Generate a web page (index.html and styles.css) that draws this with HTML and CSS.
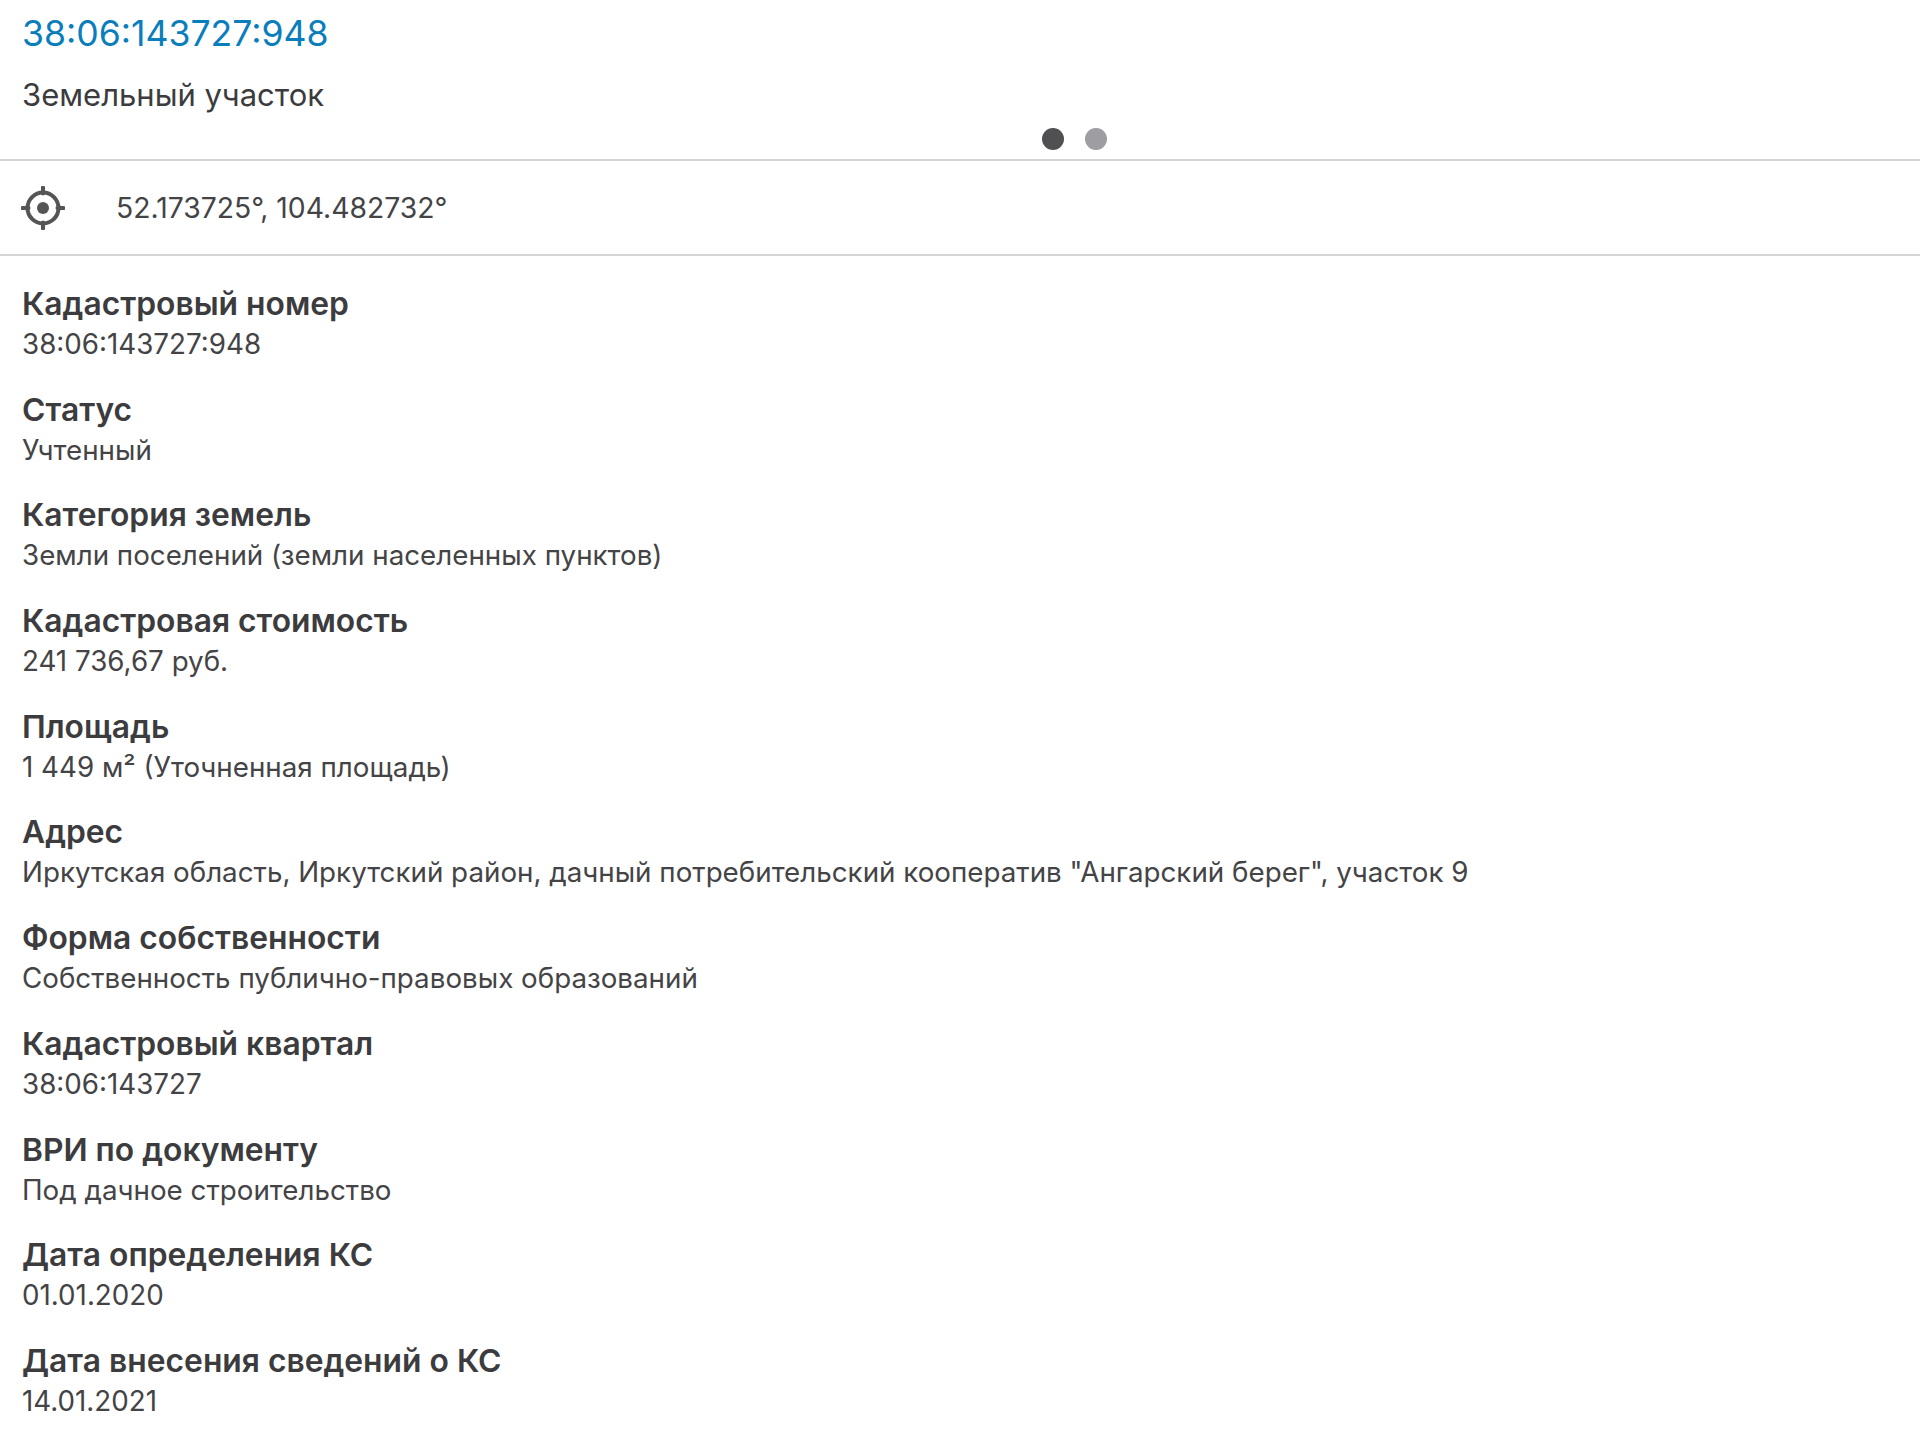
FILE: index.html
```html
<!DOCTYPE html>
<html lang="ru">
<head>
    <meta charset="UTF-8">
    <meta name="viewport" content="width=device-width, initial-scale=1.0">
    <title>Земельный участок</title>
    <link rel="stylesheet" href="styles.css">
</head>
<body>
    <!-- шапка -->
    <div class="head">
        <a class="number" href="javascript:;">38:06:143727:948</a>
        <div class="type">Земельный участок</div>
        <div class="dots">
            <span class="dot on"></span>
            <span class="dot"></span>
        </div>
    </div>
    <!-- координаты -->
    <div class="coords">
        <svg class="target" width="44" height="44" viewBox="0 0 44 44">
            <circle cx="22" cy="22" r="15.5" fill="none" stroke="#555" stroke-width="4"/>
            <circle cx="22" cy="22" r="6" fill="#555"/>
            <path d="M22 1.5v6M22 36.5v6M1.5 22h6M36.5 22h6" stroke="#555" stroke-width="4" stroke-linecap="round"/>
        </svg>
        <span>52.173725°, 104.482732°</span>
    </div>
    <!-- свойства -->
    <div class="props">
        <div class="prop"><div class="name">Кадастровый номер</div><div class="value">38:06:143727:948</div></div>
        <div class="prop"><div class="name">Статус</div><div class="value">Учтенный</div></div>
        <div class="prop"><div class="name">Категория земель</div><div class="value">Земли поселений (земли населенных пунктов)</div></div>
        <div class="prop"><div class="name">Кадастровая стоимость</div><div class="value">241 736,67 руб.</div></div>
        <div class="prop"><div class="name">Площадь</div><div class="value">1 449 м² (Уточненная площадь)</div></div>
        <div class="prop"><div class="name">Адрес</div><div class="value">Иркутская область, Иркутский район, дачный потребительский кооператив "Ангарский берег", участок 9</div></div>
        <div class="prop"><div class="name">Форма собственности</div><div class="value">Собственность публично-правовых образований</div></div>
        <div class="prop"><div class="name">Кадастровый квартал</div><div class="value">38:06:143727</div></div>
        <div class="prop"><div class="name">ВРИ по документу</div><div class="value">Под дачное строительство</div></div>
        <div class="prop"><div class="name">Дата определения КС</div><div class="value">01.01.2020</div></div>
        <div class="prop"><div class="name">Дата внесения сведений о КС</div><div class="value">14.01.2021</div></div>
    </div>
</body>
</html>
```

FILE: styles.css
```css
*{
    margin: 0;
    padding: 0;
    box-sizing: border-box;
}
html, body{
    height: 1440px;
    overflow: hidden;
}
body{
    background: #fff;
    color: #3c3c3e;
    font-family: Inter, "Noto Sans", sans-serif;
}
.head{
    height: 161px;
    padding: 13px 22px 0;
    border-bottom: 2px solid #d4d4d4;
}
.number{
    display: block;
    height: 42px;
    line-height: 42px;
    color: #0a7dbd;
    font-size: 35.6px;
    text-decoration: none;
}
.type{
    height: 40px;
    margin-top: 20px;
    line-height: 40px;
    font-size: 31px;
}
.dots{
    display: flex;
    justify-content: center;
    gap: 21px;
    margin-top: 13px;
    padding-left: 229px;
}
.dot{
    width: 22px;
    height: 22px;
    border-radius: 50%;
    background: #9e9ea2;
}
.dot.on{
    background: #505052;
}
.coords{
    display: flex;
    align-items: center;
    height: 95px;
    padding-left: 21px;
    border-bottom: 2px solid #d4d4d4;
    color: #444446;
    font-size: 28.3px;
}
.target{
    margin-right: 51px;
}
.props{
    padding: 26px 22px 0;
}
.prop{
    height: 105.7px;
}
.name{
    height: 43px;
    line-height: 43px;
    font-size: 31.8px;
    font-weight: 600;
}
.value{
    height: 38px;
    line-height: 38px;
    color: #444446;
    font-size: 27.75px;
}
```
